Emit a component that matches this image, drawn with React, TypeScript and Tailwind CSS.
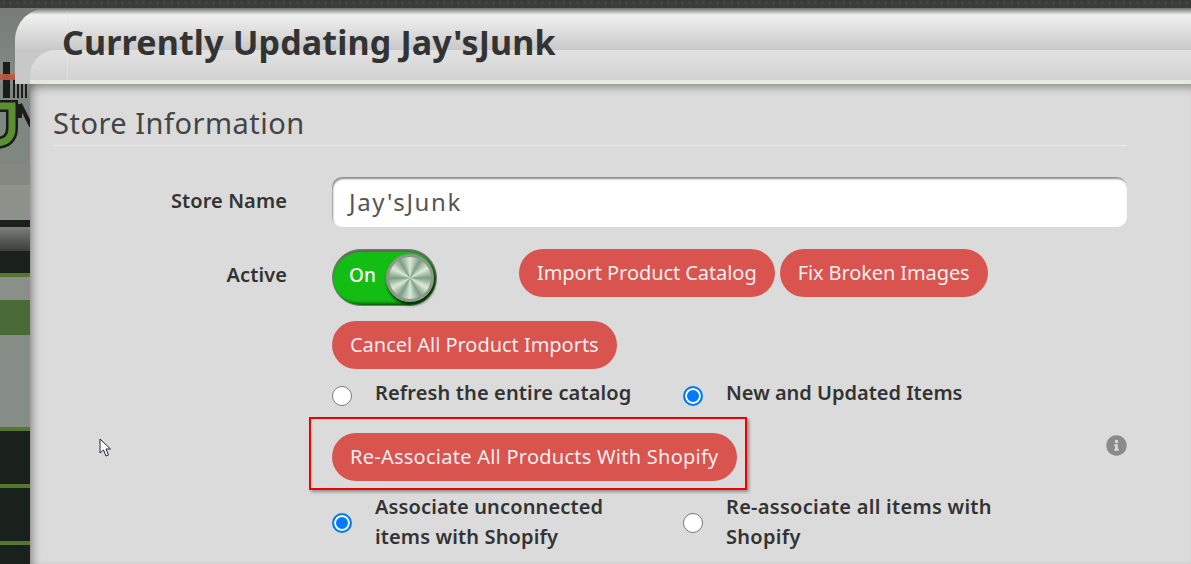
import React from "react";
import { FaInfoCircle } from "react-icons/fa";

const font = { fontFamily: '"Noto Sans", sans-serif' };

function Pill({ children, className = "" }: { children: React.ReactNode; className?: string }) {
  return (
    <button className={`h-[48px] rounded-full bg-[#d9534f] px-[18px] text-[20px] text-[#f8eeee] whitespace-nowrap ${className}`}>
      {children}
    </button>
  );
}

function Radio({ on, className = "" }: { on?: boolean; className?: string }) {
  return on ? (
    <span className={`block h-[20px] w-[20px] shrink-0 rounded-full border-2 border-[#007bff] bg-[#007bff] shadow-[inset_0_0_0_2px_#ffffff] ${className}`} />
  ) : (
    <span className={`block h-[20px] w-[20px] shrink-0 rounded-full border border-[#7a7a7a] bg-white ${className}`} />
  );
}

function Logo() {
  return (
    <svg width="30" height="105" viewBox="0 0 30 105" className="block">
      <defs>
        <linearGradient id="lg" x1="0" y1="0" x2="0" y2="1">
          <stop offset="0" stopColor="#3f6b22" />
          <stop offset="1" stopColor="#7fb640" />
        </linearGradient>
        <filter id="bl"><feGaussianBlur stdDeviation="0.7" /></filter>
      </defs>
      <g filter="url(#bl)">
        <rect x="3" y="2" width="7" height="36" fill="#1b1f1c" />
        <rect x="13" y="18" width="2" height="20" fill="#1b1f1c" />
        <rect x="17" y="18" width="2" height="20" fill="#1b1f1c" />
        <rect x="21" y="18" width="2" height="20" fill="#1b1f1c" />
        <rect x="25" y="20" width="2" height="18" fill="#1b1f1c" />
        <rect x="0" y="14" width="28" height="6" fill="#bf5a3e" opacity="0.9" />
        <path d="M-4 46 L12 46 L12 68 C12 78 6 83 -4 83" fill="none" stroke="#1b1f1c" strokeWidth="12" />
        <path d="M-4 46 L12 46 L12 68 C12 78 6 83 -4 83" fill="url(#lg)" fillOpacity="0" stroke="#5c8f30" strokeWidth="7" />
        <rect x="-2" y="54" width="6" height="20" fill="#7f8781" />
        <path d="M20 44 L20 58 M20 44 L31 66" fill="none" stroke="#1b1f1c" strokeWidth="4" />
      </g>
    </svg>
  );
}

function Strip() {
  return (
    <div className="flex w-[30px] shrink-0 flex-col self-stretch">
      <div className="relative h-[80px] bg-[#7f8781]">
        <div className="absolute left-0 top-[-24px]"><Logo /></div>
      </div>
      <div className="h-[21px] bg-[#838981]" />
      <div className="h-[5px] bg-[#8f948d]" />
      <div className="h-[30px] bg-[#8c918a]" />
      <div className="h-[7px] bg-[#1a201c]" />
      <div className="h-[24px] bg-gradient-to-b from-[#7d807c] to-[#3a3f3b]" />
      <div className="h-[22px] bg-[#1a201c]" />
      <div className="h-[4px] bg-[#56772f]" />
      <div className="h-[23px] bg-[#8a8f89]" />
      <div className="h-[35px] bg-[#4a6a38]" />
      <div className="h-[92px] bg-[#868c86]" />
      <div className="h-[4px] bg-[#56772f]" />
      <div className="h-[53px] bg-[#1a201c]" />
      <div className="h-[4px] bg-[#56772f]" />
      <div className="h-[53px] bg-[#1a201c]" />
      <div className="h-[4px] bg-[#56772f]" />
      <div className="flex-1 bg-[#1a201c]" />
    </div>
  );
}

export default function App() {
  return (
    <div className="relative h-[564px] w-[1191px] overflow-hidden bg-[#dbdbdb] text-[#333]" style={font}>
      {/* top */}
      <div className="h-[84px] bg-gradient-to-b from-[#747b75] to-[#858c85]">
        <div className="h-[8px] bg-[#3a3f3a] bg-[radial-gradient(circle,#42483f_1px,#383d38_2px)] bg-[length:7px_6px]" />
        <div className="relative z-10 ml-[15px] h-[76px] rounded-tl-[32px] bg-gradient-to-b from-[#6f746f] from-[0%] via-[#f1f1f1] via-[9%] to-[#c8c8c8] to-[56%]">
          <div className="absolute bottom-0 left-[15px] right-0 h-[34px] rounded-tl-[26px] border-b-[4px] border-[#e3ecdc] bg-gradient-to-b from-[#e2e2e2] to-[#d2d2d2]" />
          <div className="absolute bottom-0 left-[15px] top-[4px] w-[38px] border-r border-[#e4ecb8] opacity-70" />
          <h1 className="absolute left-[47px] top-[12px] text-[34px] font-bold leading-[44px] tracking-[0.15px] text-[#333]">
            Currently Updating Jay'sJunk
          </h1>
        </div>
      </div>

      <div className="flex h-[480px]">
        <Strip />
        <main className="flex-1 bg-[#dbdbdb] pl-[23px] pr-[64px] shadow-[inset_8px_0_8px_-5px_rgba(0,0,0,0.35),inset_0_10px_8px_-6px_rgba(0,0,0,0.3)]">
          <h2 className="h-[62px] border-b border-[#e9e9e9] pt-[19px] text-[29px] leading-[40px] tracking-[0.5px] text-[#444]">
            Store Information
          </h2>

          <div className="mt-[31px] grid grid-cols-[234px_1fr] gap-x-[45px]">
            <label className="h-[50px] text-right text-[20px] font-semibold leading-[48px] tracking-[0.1px]">Store Name</label>
            <div className="flex h-[50px] items-center rounded-[10px] bg-white pl-[17px] text-[24px] tracking-[1.6px] text-[#555] shadow-[inset_1px_2px_2px_rgba(0,0,0,0.45)]">
              Jay'sJunk
            </div>

            <label className="mt-[22px] h-[48px] text-right text-[20px] font-semibold leading-[52px] tracking-[0.1px]">Active</label>
            <div className="mt-[22px] flex items-start">
              <div className="flex h-[57px] w-[105px] items-center rounded-full border border-[#777] bg-[#14bd14] pl-[16px] pr-[2px] shadow-[inset_0_2px_1px_#666,inset_-3px_-2px_3px_#0a5a0a]">
                <span className="-mt-[4px] flex-1 text-[19px] font-medium text-white">On</span>
                <span className="h-[48px] w-[48px] rounded-full border-[3px] border-[#8d988d] bg-[conic-gradient(#dcebd8,#7e9e84,#dcebd8,#7e9e84,#dcebd8,#7e9e84,#dcebd8,#7e9e84,#dcebd8,#7e9e84,#dcebd8,#7e9e84,#dcebd8)] shadow-[1px_3px_3px_#063006]" />
              </div>
              <Pill className="ml-[82px] tracking-[-0.07px]">Import Product Catalog</Pill>
              <Pill className="ml-[5px] tracking-[-0.1px]">Fix Broken Images</Pill>
            </div>

            <div />
            <div className="mt-[15px]"><Pill className="tracking-[-0.03px]">Cancel All Product Imports</Pill></div>

            <div />
            <div className="mt-[14px] flex items-center text-[20px] font-semibold leading-[30px]">
              <div className="flex w-[351px] items-center gap-[23px] tracking-[0.13px]"><Radio /><span className="-mt-[5px]">Refresh the entire catalog</span></div>
              <div className="flex items-center gap-[23px]"><Radio on /><span className="-mt-[5px] tracking-[-0.01px]">New and Updated Items</span></div>
            </div>

            <div />
            <div className="relative mt-[25px] flex items-start justify-between">
              <Pill className="tracking-[0.25px]">Re-Associate All Products With Shopify</Pill>
              <FaInfoCircle className="mt-[2px] text-[#8a8a8a]" size={21} />
              <div className="absolute left-[-23px] top-[-16px] h-[73px] w-[438px] border-2 border-[#f00000] shadow-[2px_2px_3px_rgba(0,0,0,0.35)]" />
            </div>

            <div />
            <div className="mt-[11px] flex items-center text-[20px] font-semibold leading-[30px]">
              <div className="flex w-[351px] items-center gap-[23px] tracking-[0.13px]"><Radio on className="mt-[2px]" /><span className="w-[270px]">Associate unconnected items with Shopify</span></div>
              <div className="flex items-center gap-[23px] tracking-[0.28px]"><Radio className="mt-[2px]" /><span className="w-[285px]">Re-associate all items with Shopify</span></div>
            </div>
          </div>
        </main>
      </div>

      <svg className="absolute left-[99px] top-[438px]" width="13" height="20" viewBox="0 0 13 20">
        <path d="M1 1 L1 15 L4.5 12 L7 18 L9.5 17 L7 11 L11.5 11 Z" fill="#fff" stroke="#23233a" strokeWidth="1" />
      </svg>
    </div>
  );
}
